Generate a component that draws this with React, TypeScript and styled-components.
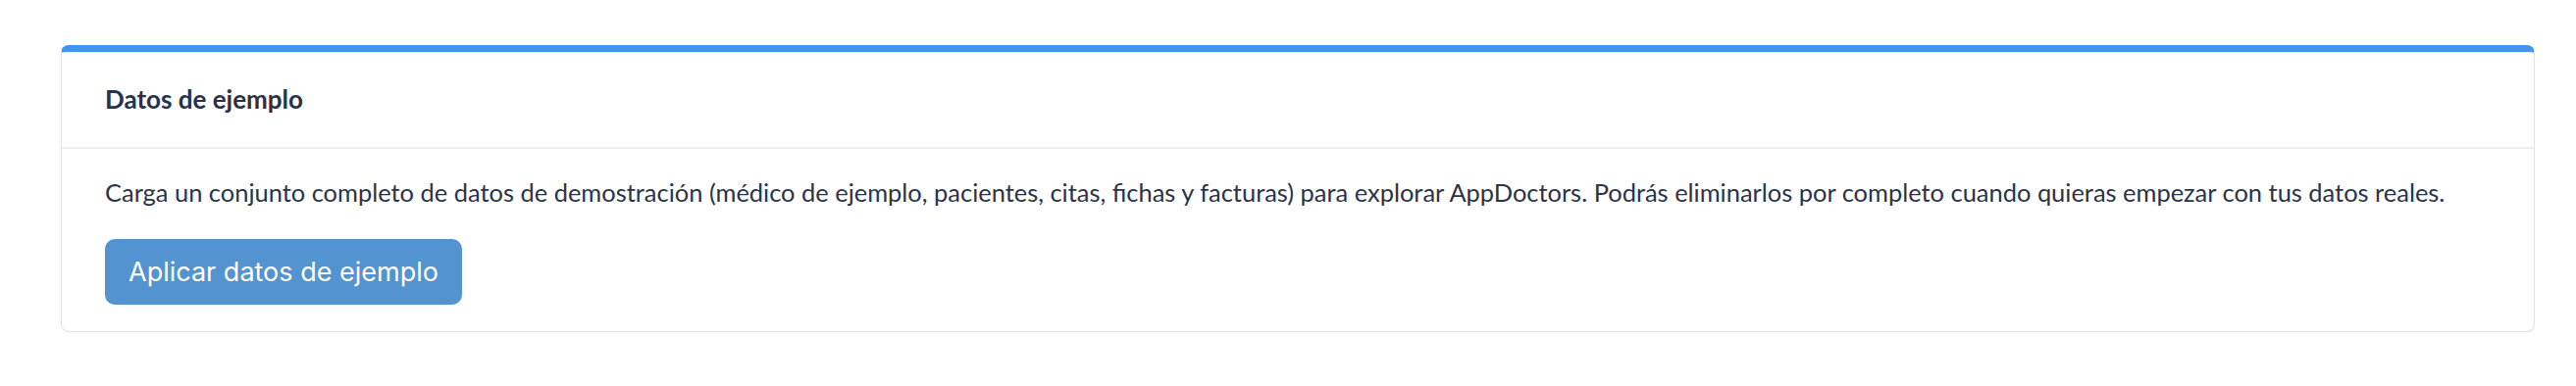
import React from 'react';
import styled, { createGlobalStyle } from 'styled-components';

const GlobalStyle = createGlobalStyle`
  html, body {
    margin: 0;
    padding: 0;
    background: #ffffff;
  }
  * {
    box-sizing: border-box;
  }
`;

export const Page = styled.div`
  padding: 46px 42px 40px 62px;
  background: #ffffff;
`;

export const Card = styled.section`
  background: #ffffff;
  border: 1px solid #dfe0e9;
  border-top: 7px solid #4394f1;
  border-radius: 8px;
  display: flex;
  flex-direction: column;
`;

export const CardHeader = styled.div`
  padding: 29px 44px 29px 44px;
  border-bottom: 2px solid #eceef4;
`;

export const CardTitle = styled.h3`
  margin: 0;
  font-family: Lato, "Noto Sans", sans-serif;
  font-weight: 700;
  font-size: 26px;
  line-height: 39px;
  color: #28324a;
`;

export const CardBody = styled.div`
  padding: 26px 44px 27px 44px;
  display: flex;
  flex-direction: column;
  align-items: flex-start;
  gap: 28px;
`;

export const Description = styled.p`
  margin: 0;
  font-family: Lato, "Noto Sans", sans-serif;
  font-weight: 400;
  font-size: 25.45px;
  line-height: 37.5px;
  color: #2b3349;
`;

export const PrimaryButton = styled.button`
  border: none;
  border-radius: 10px;
  background: #5293d0;
  color: #ffffff;
  font-family: Inter, "Noto Sans", sans-serif;
  font-weight: 400;
  font-size: 27px;
  line-height: 39px;
  padding: 14px 24px;
  cursor: pointer;
`;

export default function App() {
  return (
    <>
      <GlobalStyle />
      <Page>
        <Card>
          <CardHeader>
            <CardTitle>Datos de ejemplo</CardTitle>
          </CardHeader>
          <CardBody>
            <Description>
              Carga un conjunto completo de datos de demostración (médico de ejemplo, pacientes, citas, fichas y
              facturas) para explorar AppDoctors. Podrás eliminarlos por completo cuando quieras empezar con tus datos
              reales.
            </Description>
            <PrimaryButton type="button">Aplicar datos de ejemplo</PrimaryButton>
          </CardBody>
        </Card>
      </Page>
    </>
  );
}
